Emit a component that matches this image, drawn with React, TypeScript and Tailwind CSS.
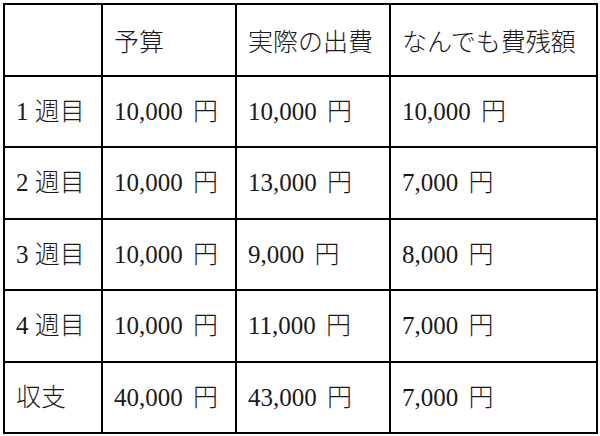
const HEADERS = ["", "予算", "実際の出費", "なんでも費残額"];

const ROWS = [
  ["1 週目", "10,000", "10,000", "10,000"],
  ["2 週目", "10,000", "13,000", "7,000"],
  ["3 週目", "10,000", "9,000", "8,000"],
  ["4 週目", "10,000", "11,000", "7,000"],
  ["収支", "40,000", "43,000", "7,000"],
];

const cell =
  "border-2 border-black h-[71.5px] pl-[11px] pr-0 align-middle whitespace-nowrap font-light";

export default function App() {
  return (
    <div
      className="w-[600px] h-[436px] bg-white pt-[3px] pl-[3px] text-[25px] text-[#1a1a1a] leading-none"
      style={{ fontFamily: '"Liberation Serif", "Noto Sans CJK JP", serif' }}
    >
      <table className="border-collapse table-fixed w-[593px]">
        <colgroup>
          <col className="w-[98px]" />
          <col className="w-[134px]" />
          <col className="w-[154px]" />
          <col className="w-[207px]" />
        </colgroup>
        <thead>
          <tr>
            {HEADERS.map((h, i) => (
              <th key={i} className={`${cell} text-left pt-[6px]`}>
                {h}
              </th>
            ))}
          </tr>
        </thead>
        <tbody>
          {ROWS.map(([label, ...amounts]) => (
            <tr key={label}>
              <td className={cell}>{label}</td>
              {amounts.map((v, i) => (
                <td key={i} className={cell}>
                  {v} <span className="ml-[4px]">円</span>
                </td>
              ))}
            </tr>
          ))}
        </tbody>
      </table>
    </div>
  );
}
